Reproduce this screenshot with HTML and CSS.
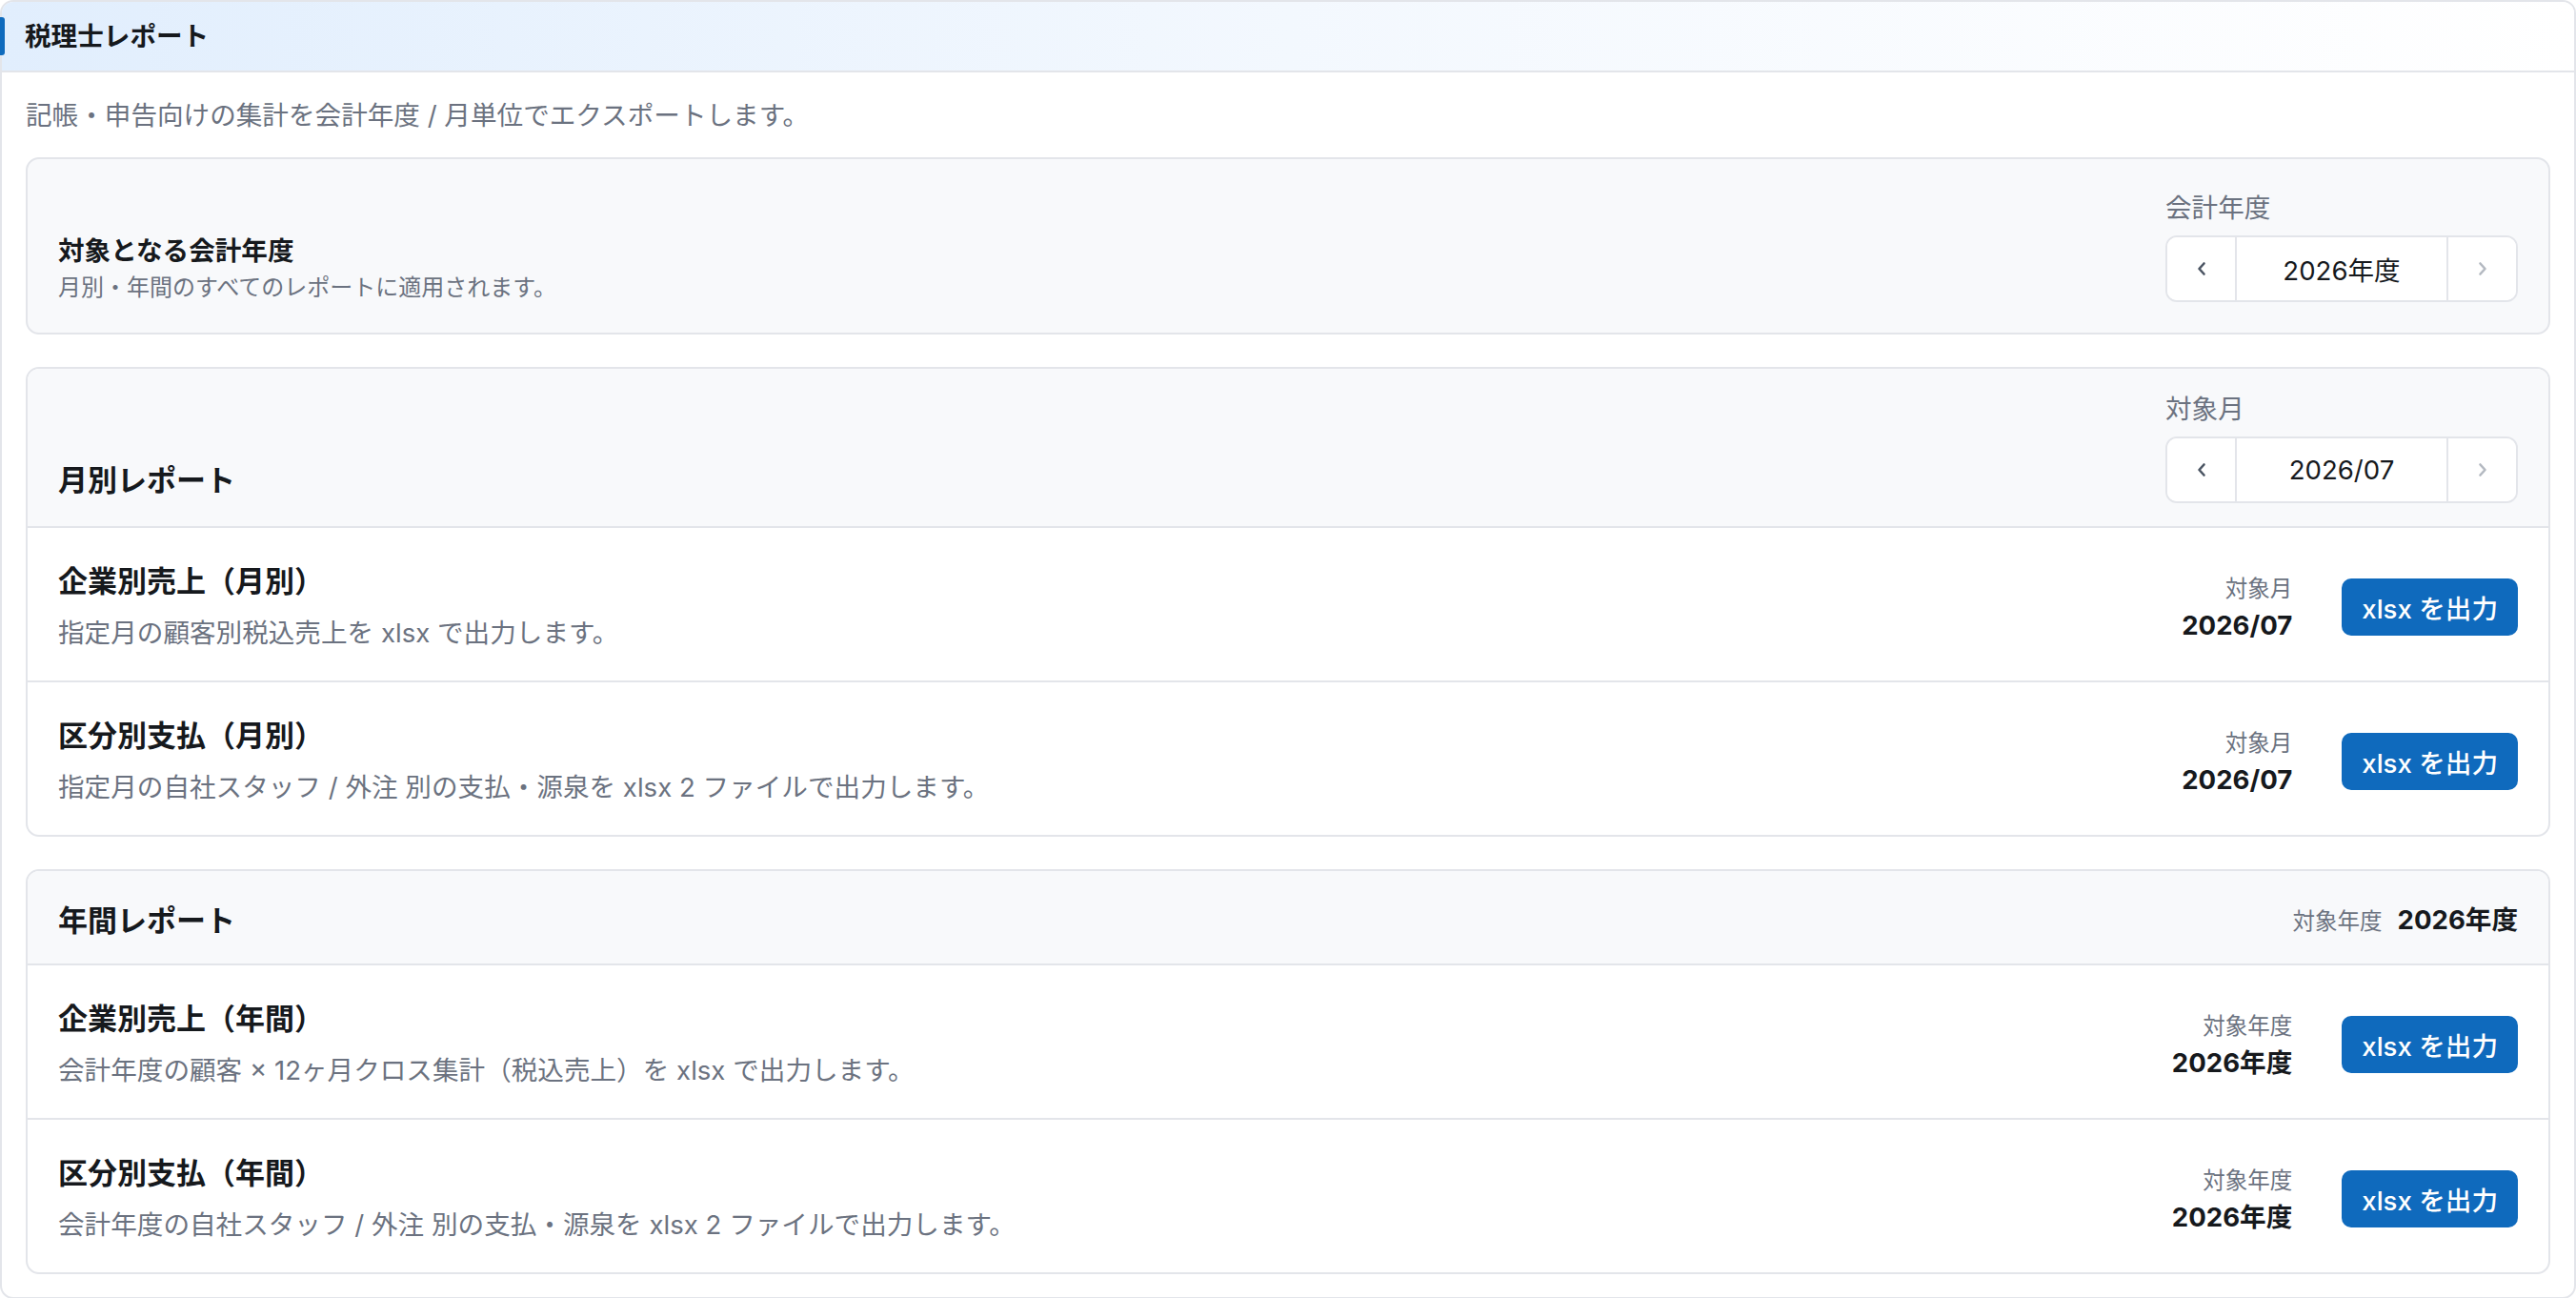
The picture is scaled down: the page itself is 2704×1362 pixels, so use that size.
FILE: index.html
```html
<!doctype html>
<html lang="ja">
<head>
    <meta charset="UTF-8">
    <title>税理士レポート</title>
    <link rel="stylesheet" href="styles.css">
</head>
<body>

<div class="panel">
    <div class="panel-head">
        <h1 class="panel-title">税理士レポート</h1>
    </div>

    <div class="panel-body">
        <p class="intro">記帳・申告向けの集計を会計年度 / 月単位でエクスポートします。</p>

        <div class="cards">
            <!-- 会計年度 -->
            <div class="card card-fiscal">
                <div class="fiscal-text">
                    <div class="fiscal-title">対象となる会計年度</div>
                    <div class="fiscal-sub">月別・年間のすべてのレポートに適用されます。</div>
                </div>
                <div class="picker">
                    <div class="picker-label">会計年度</div>
                    <div class="stepper">
                        <button class="step step-prev" type="button">
                            <svg width="12" height="16" viewBox="0 0 12 16"><path d="M8.5 2.5 L3.5 8 L8.5 13.5" fill="none" stroke="currentColor" stroke-width="2.6" stroke-linecap="round" stroke-linejoin="round"/></svg>
                        </button>
                        <div class="step-value">2026年度</div>
                        <button class="step step-next" type="button" disabled>
                            <svg width="12" height="16" viewBox="0 0 12 16"><path d="M3.5 2.5 L8.5 8 L3.5 13.5" fill="none" stroke="currentColor" stroke-width="2.6" stroke-linecap="round" stroke-linejoin="round"/></svg>
                        </button>
                    </div>
                </div>
            </div>

            <!-- 月別 -->
            <div class="card">
                <div class="card-head card-head-month">
                    <h2 class="section-title section-title-low">月別レポート</h2>
                    <div class="picker">
                        <div class="picker-label">対象月</div>
                        <div class="stepper">
                            <button class="step step-prev" type="button">
                                <svg width="12" height="16" viewBox="0 0 12 16"><path d="M8.5 2.5 L3.5 8 L8.5 13.5" fill="none" stroke="currentColor" stroke-width="2.6" stroke-linecap="round" stroke-linejoin="round"/></svg>
                            </button>
                            <div class="step-value">2026/07</div>
                            <button class="step step-next" type="button" disabled>
                                <svg width="12" height="16" viewBox="0 0 12 16"><path d="M3.5 2.5 L8.5 8 L3.5 13.5" fill="none" stroke="currentColor" stroke-width="2.6" stroke-linecap="round" stroke-linejoin="round"/></svg>
                            </button>
                        </div>
                    </div>
                </div>
                <div class="row">
                    <div class="row-text">
                        <div class="row-title">企業別売上（月別）</div>
                        <div class="row-desc">指定月の顧客別税込売上を xlsx で出力します。</div>
                    </div>
                    <div class="row-side">
                        <div class="target">
                            <div class="target-label">対象月</div>
                            <div class="target-value">2026/07</div>
                        </div>
                        <button class="export" type="button">xlsx を出力</button>
                    </div>
                </div>
                <div class="row">
                    <div class="row-text">
                        <div class="row-title">区分別支払（月別）</div>
                        <div class="row-desc">指定月の自社スタッフ / 外注 別の支払・源泉を xlsx 2 ファイルで出力します。</div>
                    </div>
                    <div class="row-side">
                        <div class="target">
                            <div class="target-label">対象月</div>
                            <div class="target-value">2026/07</div>
                        </div>
                        <button class="export" type="button">xlsx を出力</button>
                    </div>
                </div>
            </div>

            <!-- 年間 -->
            <div class="card">
                <div class="card-head card-head-year">
                    <h2 class="section-title">年間レポート</h2>
                    <div class="year-info">
                        <span class="year-label">対象年度</span>
                        <span class="year-value">2026年度</span>
                    </div>
                </div>
                <div class="row">
                    <div class="row-text">
                        <div class="row-title">企業別売上（年間）</div>
                        <div class="row-desc">会計年度の顧客 × 12ヶ月クロス集計（税込売上）を xlsx で出力します。</div>
                    </div>
                    <div class="row-side">
                        <div class="target">
                            <div class="target-label">対象年度</div>
                            <div class="target-value">2026年度</div>
                        </div>
                        <button class="export" type="button">xlsx を出力</button>
                    </div>
                </div>
                <div class="row">
                    <div class="row-text">
                        <div class="row-title">区分別支払（年間）</div>
                        <div class="row-desc">会計年度の自社スタッフ / 外注 別の支払・源泉を xlsx 2 ファイルで出力します。</div>
                    </div>
                    <div class="row-side">
                        <div class="target">
                            <div class="target-label">対象年度</div>
                            <div class="target-value">2026年度</div>
                        </div>
                        <button class="export" type="button">xlsx を出力</button>
                    </div>
                </div>
            </div>
        </div>
    </div>
</div>

</body>
</html>
```

FILE: styles.css
```css
body {
    margin: 0;
    font-family: Inter, "Noto Sans CJK JP", sans-serif;
    color: #16191d;
    background: #fff;
}

.panel {
    border: 2px solid #e3e5ea;
    border-radius: 14px;
    padding-bottom: 24px;
}

/* header strip with the blue mark on the left */
.panel-head {
    position: relative;
    display: flex;
    align-items: center;
    height: 72px;
    padding: 0 24px;
    border-bottom: 2px solid #e3e5ea;
    border-radius: 12px 12px 0 0;
    background: linear-gradient(90deg, #e1eefd 0%, #f3f8fe 50%, #ffffff 100%);
}
.panel-head::before {
    content: "";
    position: absolute;
    left: -2px;
    top: 16px;
    width: 5px;
    height: 40px;
    border-radius: 0 3px 3px 0;
    background: #0f6bbd;
}
.panel-title {
    margin: 0;
    font-size: 27.6px;
    line-height: 36px;
    font-weight: 700;
}

.panel-body {
    padding: 0 25px;
}
.intro {
    margin: 0 0 24px;
    padding-top: 25px;
    font-size: 27.6px;
    line-height: 40px;
    color: #6b7280;
}

.cards {
    display: flex;
    flex-direction: column;
    gap: 34px;
}
.card {
    border: 2px solid #e3e5ea;
    border-radius: 14px;
    background: #fff;
    overflow: hidden;
}

/* fiscal year card */
.card-fiscal {
    display: flex;
    justify-content: space-between;
    align-items: flex-end;
    padding: 33px 32px 32px;
    background: #f8f9fb;
}
.fiscal-title {
    font-size: 27.6px;
    line-height: 36px;
    font-weight: 700;
    margin-bottom: 6px;
}
.fiscal-sub {
    font-size: 24px;
    line-height: 30px;
    color: #6b7280;
}

.picker-label {
    font-size: 27.6px;
    line-height: 36px;
    color: #6b7280;
    margin-bottom: 11px;
}
.stepper {
    display: flex;
    width: 370px;
    height: 70px;
    box-sizing: border-box;
    border: 2px solid #e3e5ea;
    border-radius: 12px;
    background: #fff;
    overflow: hidden;
}
.step {
    display: flex;
    align-items: center;
    justify-content: center;
    width: 73px;
    padding: 0;
    border: none;
    background: #fff;
    color: #4b5563;
}
.step-prev {
    border-right: 2px solid #e3e5ea;
}
.step-next {
    border-left: 2px solid #e3e5ea;
    color: #b4b9c1;
}
.step-value {
    flex: 1;
    display: flex;
    align-items: center;
    justify-content: center;
    font-size: 27.6px;
    color: #16191d;
}

/* section cards */
.card-head {
    display: flex;
    justify-content: space-between;
    background: #f8f9fb;
    border-bottom: 2px solid #e3e5ea;
    padding: 0 32px;
}
.card-head-month {
    align-items: flex-end;
    padding-top: 24px;
    padding-bottom: 24px;
}
.card-head-year {
    align-items: center;
    padding-top: 31px;
    padding-bottom: 24px;
}
.section-title {
    margin: 0;
    font-size: 31px;
    line-height: 40px;
    font-weight: 700;
}
.section-title-low {
    margin-bottom: 4px;
}

.year-info {
    display: flex;
    align-items: baseline;
    gap: 16px;
    line-height: 40px;
}
.year-label {
    font-size: 23.5px;
    color: #6b7280;
}
.year-value {
    font-size: 27.6px;
    font-weight: 700;
}

.row {
    display: flex;
    justify-content: space-between;
    align-items: center;
    padding: 36px 32px 30px;
}
.row + .row {
    border-top: 2px solid #e3e5ea;
}
.row-title {
    font-size: 31px;
    line-height: 40px;
    font-weight: 700;
    margin-bottom: 14px;
}
.row-desc {
    font-size: 27.6px;
    line-height: 40px;
    color: #6b7280;
}

.row-side {
    display: flex;
    align-items: center;
    gap: 52px;
}
.target {
    text-align: right;
}
.target-label {
    font-size: 23.5px;
    line-height: 30px;
    color: #6b7280;
    margin-bottom: 7px;
}
.target-value {
    font-size: 27.6px;
    line-height: 32px;
    font-weight: 700;
}
.export {
    height: 60px;
    padding: 0 21px;
    border: none;
    border-radius: 10px;
    background: #0f6abd;
    color: #fff;
    font-family: Inter, "Noto Sans CJK JP", sans-serif;
    font-size: 27.6px;
    font-weight: 500;
}
```
